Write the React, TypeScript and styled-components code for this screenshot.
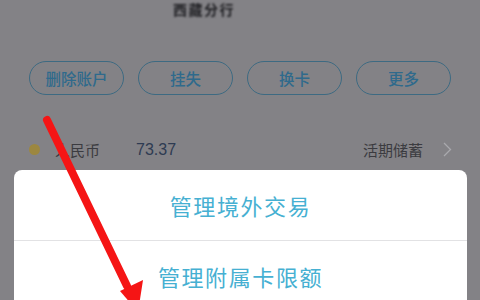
import React from "react";
import styled, { createGlobalStyle } from "styled-components";

const Global = createGlobalStyle`
  html, body { margin: 0; padding: 0; }
  body { font-family: "Noto Sans CJK SC", "Noto Sans", sans-serif; }
`;

const Screen = styled.div`
  position: relative;
  width: 480px;
  height: 300px;
  overflow: hidden;
  background: #838286;
  display: flex;
  flex-direction: column;
`;

const Header = styled.div`
  height: 18px;
  display: flex;
  padding-left: 173px;
  align-items: flex-start;
`;

const BlurName = styled.span`
  font-size: 14px;
  line-height: 16px;
  margin-top: 1px;
  color: #1e1e22;
  font-weight: 700;
  letter-spacing: 1.5px;
  filter: blur(1.3px);
`;

const ActionRow = styled.div`
  display: flex;
  gap: 14px;
  padding: 44px 0 0 29px;
`;

const Pill = styled.button`
  width: 95px;
  height: 34px;
  box-sizing: border-box;
  border: 1.5px solid #3d6a82;
  border-radius: 17px;
  background: transparent;
  color: #2f6a8c;
  font-family: "Noto Sans CJK SC", sans-serif;
  font-size: 15.5px;
  font-weight: 500;
  display: flex;
  align-items: center;
  justify-content: center;
  padding: 0;
`;

const AccountRow = styled.div`
  display: flex;
  align-items: center;
  height: 24px;
  margin-top: 44px;
  padding: 0 28px 0 29px;
  font-size: 15px;
`;

const Dot = styled.span`
  width: 11px;
  height: 11px;
  border-radius: 50%;
  background: #9c8740;
  margin-right: 15px;
`;

const Currency = styled.span`
  color: #3b3b40;
  width: 81px;
`;

const Amount = styled.span`
  color: #2e3b52;
  font-family: "Liberation Sans", sans-serif;
  font-size: 16px;
  flex: 1;
`;

const Kind = styled.span`
  color: #3b3b40;
  margin-right: 20px;
`;

const Sheet = styled.div`
  margin: 10px 13px 0 14px;
  background: #ffffff;
  border-radius: 8px;
  display: flex;
  flex-direction: column;
  flex: 1;
`;

const SheetItem = styled.div<{ $divider?: boolean }>`
  height: 70px;
  flex: none;
  display: flex;
  align-items: center;
  justify-content: center;
  color: #46b0d2;
  font-size: 22px;
  letter-spacing: 1.6px;
  border-bottom: ${(p) => (p.$divider ? "1px solid #e2e2e4" : "none")};
`;

const ArrowLayer = styled.svg`
  position: absolute;
  left: 0;
  top: 0;
  pointer-events: none;
`;

export default function App() {
  return (
    <>
      <Global />
      <Screen>
        <Header>
          <BlurName>西藏分行</BlurName>
        </Header>
        <ActionRow>
          <Pill>删除账户</Pill>
          <Pill>挂失</Pill>
          <Pill>换卡</Pill>
          <Pill>更多</Pill>
        </ActionRow>
        <AccountRow>
          <Dot />
          <Currency>人民币</Currency>
          <Amount>73.37</Amount>
          <Kind>活期储蓄</Kind>
          <svg width="9" height="15" viewBox="0 0 9 15">
            <path d="M1 1 L7.5 7.5 L1 14" fill="none" stroke="#a9a9ad" strokeWidth="1.3" />
          </svg>
        </AccountRow>
        <Sheet>
          <SheetItem $divider>管理境外交易</SheetItem>
          <SheetItem>管理附属卡限额</SheetItem>
        </Sheet>
        <ArrowLayer width="480" height="300" viewBox="0 0 480 300">
          <line x1="47" y1="120" x2="127" y2="286" stroke="#f51515" strokeWidth="8" strokeLinecap="round" />
          <polygon points="120,291 143,280 138,312" fill="#f51515" />
        </ArrowLayer>
      </Screen>
    </>
  );
}
